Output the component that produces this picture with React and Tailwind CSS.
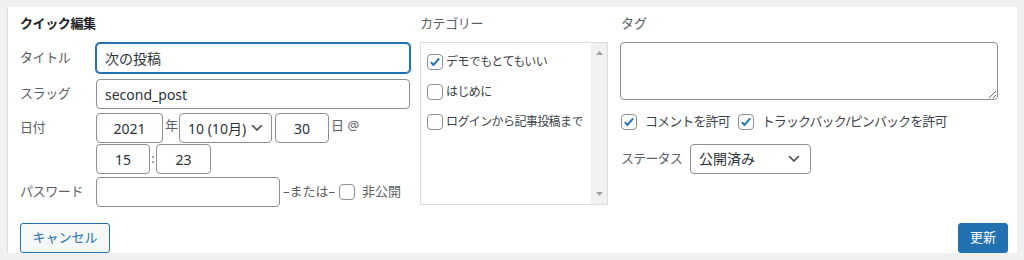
import React from 'react';

const FONT = "font-['Noto_Sans','Noto_Sans_CJK_JP',sans-serif]";

const CATEGORIES = [
  { label: 'デモでもとてもいい', checked: true },
  { label: 'はじめに', checked: false },
  { label: 'ログインから記事投稿まで', checked: false },
];

function Checkbox({ checked }) {
  return (
    <span className="flex h-[16px] w-[16px] shrink-0 items-center justify-center rounded-[4px] border border-[#8c8f94] bg-white">
      {checked && (
        <svg width="14" height="14" viewBox="0 0 16 16" fill="none">
          <path d="M3.2 8.2l3.1 3.2 6.5-7.6" stroke="#2271b1" strokeWidth="2.2" strokeLinejoin="round" />
        </svg>
      )}
    </span>
  );
}

function Chevron() {
  return (
    <svg width="16" height="16" viewBox="0 0 20 20" fill="#50575e">
      <path d="M5 6l5 5 5-5 2 1-7 7-7-7z" />
    </svg>
  );
}

function TextInput({ value, className = '', center }) {
  return (
    <input
      readOnly
      value={value}
      className={`h-[30px] rounded-[4px] border border-[#8c8f94] bg-white px-[8px] text-[14px] text-[#2c3338] outline-none ${center ? 'text-center' : ''} ${className}`}
    />
  );
}

function Label({ children }) {
  return <span className="w-[76px] shrink-0 text-[13px] tracking-[-0.4px] text-[#5b6167]">{children}</span>;
}

export default function App() {
  return (
    <div className={`h-[260px] w-[1024px] overflow-hidden bg-[#f0f0f1] pt-[7px] pl-[7px] ${FONT}`}>
      <div className="flex h-[246px] w-[1010px] flex-col border-l border-[#dcdcde] bg-white pl-[12px] pt-[6px]">
        <div className="flex h-[201px]">
          {/* Left column */}
          <div className="flex w-[390px] flex-col">
            <h2 className="h-[20px] text-[13px] font-bold leading-[20px] tracking-[-0.4px] text-[#1d2327]">クイック編集</h2>
            <div className="mt-[10px] flex items-center">
              <Label>タイトル</Label>
              <input
                readOnly
                value="次の投稿"
                className="h-[30px] w-[314px] rounded-[4px] border border-[#2271b1] bg-white px-[8px] text-[14px] text-[#2c3338] shadow-[0_0_0_1px_#2271b1] outline-none"
              />
            </div>
            <div className="mt-[6px] flex items-center">
              <Label>スラッグ</Label>
              <TextInput value="second_post" className="w-[314px]" />
            </div>
            <div className="mt-[4px] flex items-center text-[13px] text-[#5b6167]">
              <Label>日付</Label>
              <TextInput value="2021" center className="w-[67px]" />
              <span className="mb-[4px] ml-[2px]">年</span>
              <div className="ml-[1px] flex h-[30px] w-[93px] items-center justify-between rounded-[4px] border border-[#8c8f94] pl-[8px] pr-[6px] text-[14px] text-[#2c3338]">
                <span>10 (10月)</span>
                <Chevron />
              </div>
              <TextInput value="30" center className="ml-[3px] w-[54px]" />
              <span className="mb-[4px] ml-[2px]">日 @</span>
            </div>
            <div className="mt-[1px] flex items-center pl-[76px] text-[13px] text-[#5b6167]">
              <TextInput value="15" center className="w-[54px]" />
              <span className="mx-[1px] w-[4px] text-center">:</span>
              <TextInput value="23" center className="w-[55px]" />
            </div>
            <div className="mt-[3px] flex items-center text-[13px] text-[#5b6167]">
              <Label>パスワード</Label>
              <TextInput value="" className="w-[184px]" />
              <span className="ml-[3px]">–または–</span>
              <span className="ml-[4px]">
                <Checkbox />
              </span>
              <span className="ml-[7px]">非公開</span>
            </div>
          </div>

          {/* Categories */}
          <div className="ml-[10px] flex w-[188px] flex-col">
            <span className="h-[20px] text-[13px] leading-[20px] tracking-[-0.4px] text-[#5b6167]">カテゴリー</span>
            <div className="mt-[9px] flex h-[163px] border border-[#dcdcde]">
              <ul className="flex flex-1 flex-col pl-[6px] pt-[4px]">
                {CATEGORIES.map(cat => (
                  <li key={cat.label} className="flex h-[30px] items-center">
                    <Checkbox checked={cat.checked} />
                    <span className="ml-[3px] text-[12px] tracking-[-0.6px] text-[#3c434a]">{cat.label}</span>
                  </li>
                ))}
              </ul>
              <div className="flex w-[16px] flex-col items-center justify-between bg-[#f1f1f1] py-[8px]">
                <svg width="7" height="4" viewBox="0 0 7 4"><path d="M3.5 0L7 4H0z" fill="#a3a3a3" /></svg>
                <svg width="7" height="4" viewBox="0 0 7 4"><path d="M0 0h7L3.5 4z" fill="#a3a3a3" /></svg>
              </div>
            </div>
          </div>

          {/* Tags */}
          <div className="ml-[12px] flex w-[378px] flex-col">
            <span className="h-[20px] pl-[1px] text-[13px] leading-[20px] text-[#5b6167]">タグ</span>
            <textarea
              readOnly
              className="mt-[9px] h-[58px] w-[378px] resize-y rounded-[4px] border border-[#8c8f94] bg-white outline-none"
            />
            <div className="mt-[12px] flex items-center pl-[1px] text-[13px] tracking-[-0.9px] text-[#3c434a]">
              <Checkbox checked />
              <span className="ml-[8px]">コメントを許可</span>
              <span className="ml-[8px]">
                <Checkbox checked />
              </span>
              <span className="ml-[8px]">トラックバック/ピンバックを許可</span>
            </div>
            <div className="mt-[12px] flex items-center pl-[1px]">
              <span className="text-[13px] tracking-[-0.8px] text-[#5b6167]">ステータス</span>
              <div className="ml-[8px] flex h-[30px] w-[121px] items-center justify-between rounded-[4px] border border-[#8c8f94] pl-[8px] pr-[8px] text-[14px] text-[#2c3338]">
                <span>公開済み</span>
                <Chevron />
              </div>
            </div>
          </div>
        </div>

        {/* Buttons */}
        <div className="mt-[12px] flex items-center justify-between pr-[9px]">
          <button className="h-[30px] w-[90px] rounded-[3px] border border-[#2271b1] bg-[#f6f7f7] text-[13px] text-[#2271b1]">
            キャンセル
          </button>
          <button className="h-[30px] w-[50px] rounded-[3px] border border-[#2271b1] bg-[#2271b1] text-[13px] text-white">
            更新
          </button>
        </div>
      </div>
    </div>
  );
}
